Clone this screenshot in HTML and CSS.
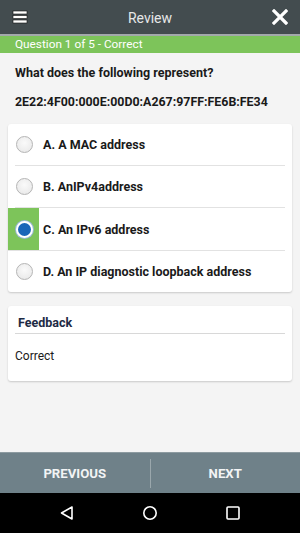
FILE: index.html
```html
<!DOCTYPE html>
<html>
<head>
<meta charset="utf-8">
<link rel="stylesheet" href="styles.css">
</head>
<body>
<div class="app">
  <header class="topbar">
    <svg class="ico-menu" width="16" height="14" viewBox="0 0 16 14"><rect x="1" y="1" width="14" height="3" fill="#fff" stroke="#111" stroke-width="0.6"/><rect x="1" y="5.5" width="14" height="3" fill="#fff" stroke="#111" stroke-width="0.6"/><rect x="1" y="10" width="14" height="3" fill="#fff" stroke="#111" stroke-width="0.6"/></svg>
    <div class="title">Review</div>
    <svg class="ico-close" width="16" height="16" viewBox="0 0 16 16"><path d="M2 2 L14 14 M14 2 L2 14" stroke="#fff" stroke-width="3.2" stroke-linecap="square"/></svg>
  </header>
  <div class="status">Question 1 of 5 - Correct</div>
  <main class="content">
    <p class="question">What does the following represent?</p>
    <p class="address">2E22:4F00:000E:00D0:A267:97FF:FE6B:FE34</p>
    <div class="card options">
      <div class="option"><span class="radio-cell"><span class="radio"></span></span><span class="label">A. A MAC address</span></div>
      <div class="option"><span class="radio-cell"><span class="radio"></span></span><span class="label">B. AnIPv4address</span></div>
      <div class="option correct"><span class="radio-cell"><span class="radio checked"></span></span><span class="label">C. An IPv6 address</span></div>
      <div class="option"><span class="radio-cell"><span class="radio"></span></span><span class="label">D. An IP diagnostic loopback address</span></div>
    </div>
    <div class="card feedback">
      <div class="fb-title">Feedback</div>
      <div class="fb-text">Correct</div>
    </div>
  </main>
  <footer class="actions">
    <button class="btn">PREVIOUS</button>
    <span class="sep"></span>
    <button class="btn">NEXT</button>
  </footer>
  <nav class="sysnav">
    <svg width="16" height="16" viewBox="0 0 16 16"><path d="M13 2 L13 14 L2.5 8 Z" fill="none" stroke="#fff" stroke-width="1.6" stroke-linejoin="round"/></svg>
    <svg width="16" height="16" viewBox="0 0 16 16"><circle cx="8" cy="8" r="6.2" fill="none" stroke="#fff" stroke-width="1.6"/></svg>
    <svg width="16" height="16" viewBox="0 0 16 16"><rect x="2" y="2" width="12" height="12" rx="1" fill="none" stroke="#fff" stroke-width="1.6"/></svg>
  </nav>
</div>
</body>
</html>
```

FILE: styles.css
```css
* { box-sizing: border-box; }
html, body { margin: 0; padding: 0; }
body {
  width: 300px;
  height: 533px;
  font-family: Roboto, "Noto Sans", Arial, sans-serif;
  background: #f4f4f4;
  overflow: hidden;
}
.app {
  display: flex;
  flex-direction: column;
  height: 533px;
}
.topbar {
  height: 36px;
  background: #434c4f;
  border-bottom: 2px solid #a3a9ab;
  display: flex;
  align-items: center;
  justify-content: space-between;
  padding: 0 12px 0 12px;
  flex-shrink: 0;
}
.title {
  color: #e6e8e8;
  font-size: 14px;
  margin-top: 1px;
}
.status {
  height: 17px;
  background: #7dc45a;
  color: #fff;
  font-size: 11.8px;
  line-height: 17px;
  padding-left: 15px;
  flex-shrink: 0;
}
.content {
  flex: 1;
  padding: 0 8px;
}
.question {
  margin: 12px 0 0 7px;
  font-size: 12.5px;
  font-weight: 700;
  color: #1a1a1a;
  line-height: 16px;
}
.address {
  margin: 13px 0 0 7px;
  font-size: 12.4px;
  font-weight: 700;
  color: #1a1a1a;
  line-height: 16px;
}
.card {
  background: #fff;
  border-radius: 3px;
  box-shadow: 0 1px 2px rgba(0,0,0,0.18);
}
.options {
  margin-top: 14px;
  padding: 0 7px 0 0;
}
.option {
  height: 42px;
  display: flex;
  align-items: center;
  margin-left: 7px;
  border-bottom: 1px solid #e2e2e2;
}
.option:last-child { border-bottom: none; height: 41px; }
.option.correct {
  margin-left: 0;
  height: 43px;
}
.radio-cell {
  width: 28px;
  height: 100%;
  display: flex;
  align-items: center;
  justify-content: flex-start;
  padding-left: 1px;
}
.option.correct .radio-cell {
  width: 31px;
  background: #7dc45a;
  padding-left: 8px;
  margin-right: 4px;
}
.radio {
  width: 17px;
  height: 17px;
  border-radius: 50%;
  border: 1px solid #b5b5b5;
  background: radial-gradient(circle at 50% 40%, #fafafa 0%, #ececec 70%, #dcdcdc 100%);
  display: block;
}
.radio.checked {
  border: 2px solid #fff;
  background: #1a66b8;
  box-shadow: 0 0 0 1px #9bb9d6;
}
.label {
  font-size: 12.5px;
  font-weight: 700;
  color: #1a1a1a;
}
.feedback {
  margin-top: 14px;
  padding: 0 7px 0 7px;
  height: 75px;
}
.fb-title {
  font-size: 12.5px;
  font-weight: 700;
  color: #1d2a44;
  padding: 9px 0 0 3px;
  height: 28px;
  border-bottom: 1px solid #d8d8d8;
}
.fb-text {
  font-size: 12px;
  color: #1a1a1a;
  padding-top: 15px;
}
.actions {
  height: 41px;
  background: #6f8189;
  border-top: 1px solid #8d9ba1;
  display: flex;
  align-items: center;
  flex-shrink: 0;
}
.btn {
  flex: 1;
  background: none;
  border: none;
  color: #f2f4f5;
  font-family: Roboto, Arial, sans-serif;
  font-weight: 700;
  font-size: 13.2px;
  height: 100%;
  padding: 0;
}
.sep {
  width: 1px;
  height: 29px;
  background: #9aa7ac;
}
.sysnav {
  height: 40px;
  background: #000;
  display: flex;
  align-items: center;
  justify-content: space-between;
  padding: 0 59px 0 59px;
  flex-shrink: 0;
}
```
